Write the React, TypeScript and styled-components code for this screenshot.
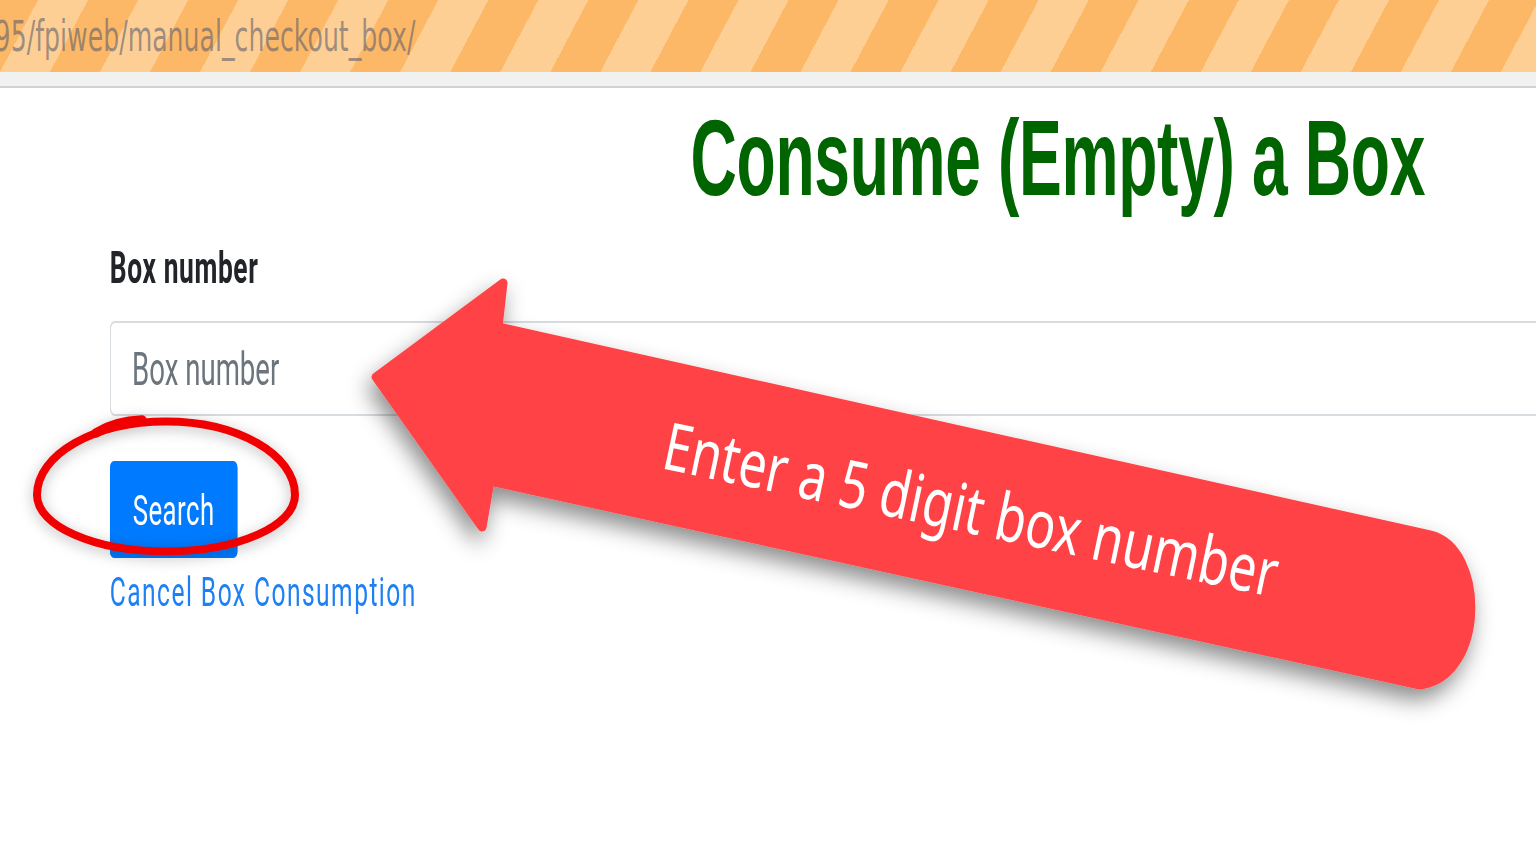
import React from "react";
import styled, { createGlobalStyle } from "styled-components";

const S = 0.6;

const Global = createGlobalStyle`
  html, body { margin: 0; padding: 0; background: #fff; overflow: hidden; }
  body { font-family: Roboto, "Liberation Sans", Arial, sans-serif; }
`;

const Viewport = styled.div`
  position: relative;
  width: 1536px;
  height: 862px;
  overflow: hidden;
  background: #fff;
`;

const Squeezed = styled.div`
  width: ${1536 / S}px;
  transform: scaleX(${S});
  transform-origin: 0 0;
`;

const AddressBar = styled.header`
  height: 72px;
  display: flex;
  align-items: center;
  overflow: hidden;
  background: repeating-linear-gradient(
    131.4deg,
    #fcb866 0 47.5px,
    #fecf95 47.5px 110.1px,
    #fcb866 110.1px 125.1px
  );
`;

const Url = styled.span`
  margin-left: -9px;
  font-family: "DejaVu Sans", "Liberation Sans", sans-serif;
  font-size: 42px;
  color: rgba(95, 95, 110, 0.6);
  white-space: nowrap;
`;

const ToolbarBand = styled.div`
  height: 14px;
  background: #f1f1f0;
  border-bottom: 2px solid #d2d2d2;
`;

const Main = styled.main`
  padding: 0 185px 0 183px;
`;

const Title = styled.h1`
  margin: 6px 0 0;
  text-align: right;
  font-family: "Liberation Sans", Arial, sans-serif;
  font-weight: 700;
  font-size: 107px;
  line-height: 128px;
  letter-spacing: -0.6px;
  color: #006400;
`;

const Form = styled.form`
  display: flex;
  flex-direction: column;
  align-items: flex-start;
`;

const FieldLabel = styled.label`
  display: block;
  margin-top: 20px;
  font-family: Roboto, sans-serif;
  font-weight: 700;
  font-size: 44px;
  line-height: 52px;
  letter-spacing: 1px;
  color: #212529;
`;

const BoxInput = styled.input`
  display: block;
  box-sizing: border-box;
  margin-top: 27px;
  width: calc(100% + 400px);
  height: 95px;
  border: 2px solid #d7dce1;
  border-radius: 8px;
  padding: 0 35px;
  font-family: Roboto, sans-serif;
  font-size: 46px;
  color: #495057;
  background: #fff;
  outline: none;
  &::placeholder {
    color: #6c757d;
  }
`;

const SearchButton = styled.button`
  display: block;
  margin-top: 45px;
  width: 213px;
  height: 97px;
  border: none;
  border-radius: 7px;
  padding: 0;
  background: #007bff;
  color: #fff;
  font-family: Roboto, sans-serif;
  font-size: 43px;
  letter-spacing: 0.8px;
  cursor: pointer;
`;

const CancelLink = styled.a`
  display: inline-block;
  margin-top: 10px;
  font-family: Roboto, sans-serif;
  font-size: 41px;
  line-height: 48px;
  letter-spacing: 2.4px;
  color: #1f80f4;
  text-decoration: none;
`;

const Annotations = styled.svg`
  position: absolute;
  left: 0;
  top: 0;
  width: 1536px;
  height: 862px;
  pointer-events: none;
`;

const ArrowText = styled.text`
  font-family: "Noto Sans", "Open Sans", sans-serif;
  font-weight: 400;
  font-size: 66px;
  fill: #ffffff;
`;

export default function App() {
  return (
    <Viewport>
      <Global />
      <Squeezed>
        <AddressBar>
          <Url>95/fpiweb/manual_checkout_box/</Url>
        </AddressBar>
        <ToolbarBand />
        <Main>
          <Title>Consume (Empty) a Box</Title>
          <Form onSubmit={(e) => e.preventDefault()}>
            <FieldLabel htmlFor="box-number">Box number</FieldLabel>
            <BoxInput id="box-number" type="text" placeholder="Box number" />
            <SearchButton type="submit">Search</SearchButton>
            <CancelLink href="#">Cancel Box Consumption</CancelLink>
          </Form>
        </Main>
      </Squeezed>

      <Annotations viewBox="0 0 1536 862">
        <defs>
          <filter id="arrowShadow" x="-20%" y="-30%" width="140%" height="170%">
            <feDropShadow dx="-4" dy="11" stdDeviation="11" floodColor="#000" floodOpacity="0.45" />
          </filter>
          <filter id="ringShadow" x="-20%" y="-40%" width="140%" height="180%">
            <feDropShadow dx="0" dy="3" stdDeviation="7" floodColor="#000" floodOpacity="0.28" />
          </filter>
        </defs>

        <g filter="url(#ringShadow)">
          <path
            d="M 166 421.5 C 237.2 421.5, 295 454.4, 295 495 C 295 526.2, 237.2 551.5, 166 551.5 C 94.8 551.5, 37 526.2, 37 495 C 37 454.4, 94.8 421.5, 166 421.5"
            fill="none"
            stroke="#f00000"
            strokeWidth="8"
          />
          <path d="M 96 433 Q 115 421 142 420" fill="none" stroke="#f00000" strokeWidth="9.5" strokeLinecap="round" />
        </g>

        <g filter="url(#arrowShadow)">
          <path
            d="M 376 377 L 503 283 L 498 327 L 1430 535 C 1486 548, 1486 676, 1420 685 L 490 481 L 482 527 Z"
            fill="#fe4245"
            stroke="#fe4245"
            strokeWidth="9"
            strokeLinejoin="round"
          />
        </g>
        <ArrowText
          x="0"
          y="0"
          transform="translate(660 468) rotate(11.9)"
          textLength="626"
          lengthAdjust="spacingAndGlyphs"
        >
          Enter a 5 digit box number
        </ArrowText>
      </Annotations>
    </Viewport>
  );
}
